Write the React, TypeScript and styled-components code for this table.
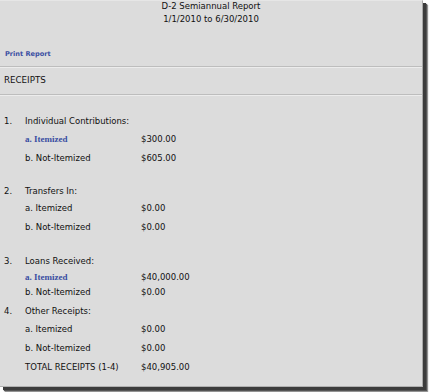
import React from 'react';
import styled, { createGlobalStyle } from 'styled-components';

type Line = {
  num?: string;
  label: string;
  amount?: string;
  link?: boolean;
  h: number;
  gap?: number;
};

const lines: Line[] = [
  { num: '1.', label: 'Individual Contributions:', h: 18 },
  { label: 'a. Itemized', amount: '$300.00', link: true, h: 18 },
  { label: 'b. Not-Itemized', amount: '$605.00', h: 20 },
  { num: '2.', label: 'Transfers In:', h: 18, gap: 14 },
  { label: 'a. Itemized', amount: '$0.00', h: 16 },
  { label: 'b. Not-Itemized', amount: '$0.00', h: 22 },
  { num: '3.', label: 'Loans Received:', h: 18, gap: 14 },
  { label: 'a. Itemized', amount: '$40,000.00', link: true, h: 14 },
  { label: 'b. Not-Itemized', amount: '$0.00', h: 16 },
  { num: '4.', label: 'Other Receipts:', h: 22 },
  { label: 'a. Itemized', amount: '$0.00', h: 14 },
  { label: 'b. Not-Itemized', amount: '$0.00', h: 24 },
  { label: 'TOTAL RECEIPTS (1-4)', amount: '$40,905.00', h: 14 },
];

const App: React.FC = () => {
  return (
    <>
      <GlobalStyle />
      <Page>
        <ReportPanel>
          <ReportTitle>
            <div>D-2 Semiannual Report</div>
            <div>1/1/2010 to 6/30/2010</div>
          </ReportTitle>

          <PrintLink href="#">Print Report</PrintLink>
          <Rule />
          <SectionName>RECEIPTS</SectionName>
          <Rule $after />

          <ReceiptList>
            {lines.map((line, i) => (
              <ReceiptRow key={i} $h={line.h} $gap={line.gap ?? 0}>
                <Num>{line.num}</Num>
                {line.link ? <ItemLink href="#">{line.label}</ItemLink> : <Label>{line.label}</Label>}
                <Amount>{line.amount}</Amount>
              </ReceiptRow>
            ))}
          </ReceiptList>
        </ReportPanel>
      </Page>
    </>
  );
};

export default App;

const GlobalStyle = createGlobalStyle`
  html, body {
    margin: 0;
    padding: 0;
    background: #ffffff;
  }
`;

const Page = styled.div`
  width: 429px;
  height: 392px;
  overflow: hidden;
`;

const ReportPanel = styled.div`
  box-sizing: border-box;
  width: 423px;
  height: 387px;
  background: #dcdcdc;
  border-top: 1px solid #e6e6e6;
  border-right: 1px solid #a8a8a8;
  border-bottom: 1px solid #b0b0b0;
  box-shadow: 3px 3px 0 #3c3c3c, 4px 4px 1px #555555, 5px 5px 1px #a0a0a0;
  font-family: 'DejaVu Sans', Verdana, sans-serif;
  font-size: 8.5px;
  color: #111111;
`;

const ReportTitle = styled.div`
  margin-top: -1px;
  text-align: center;
  line-height: 12.5px;
`;

const PrintLink = styled.a`
  display: block;
  margin: 24px 0 0 5px;
  line-height: 10px;
  font-size: 6.6px;
  font-weight: bold;
  color: #3a4ea2;
  text-decoration: none;
`;

const Rule = styled.div<{ $after?: boolean }>`
  margin-top: ${({ $after }) => ($after ? 8 : 7)}px;
  border-top: 1px solid #bdbdbd;
  border-bottom: 1px solid #ececec;
`;

const SectionName = styled.div`
  padding: 6px 0 0 4px;
  line-height: 12px;
  font-size: 8.7px;
`;

const ReceiptList = styled.div`
  padding: 16px 0 0 4px;
`;

const ReceiptRow = styled.div<{ $h: number; $gap: number }>`
  display: grid;
  grid-template-columns: 21px 116px auto;
  align-items: center;
  height: ${({ $h }) => $h}px;
  margin-top: ${({ $gap }) => $gap}px;
  white-space: nowrap;
`;

const Num = styled.span``;

const Label = styled.span``;

const ItemLink = styled.a`
  font-family: 'Liberation Serif', 'Times New Roman', serif;
  font-size: 9px;
  font-weight: bold;
  color: #3a4ea2;
  text-decoration: none;
`;

const Amount = styled.span``;
